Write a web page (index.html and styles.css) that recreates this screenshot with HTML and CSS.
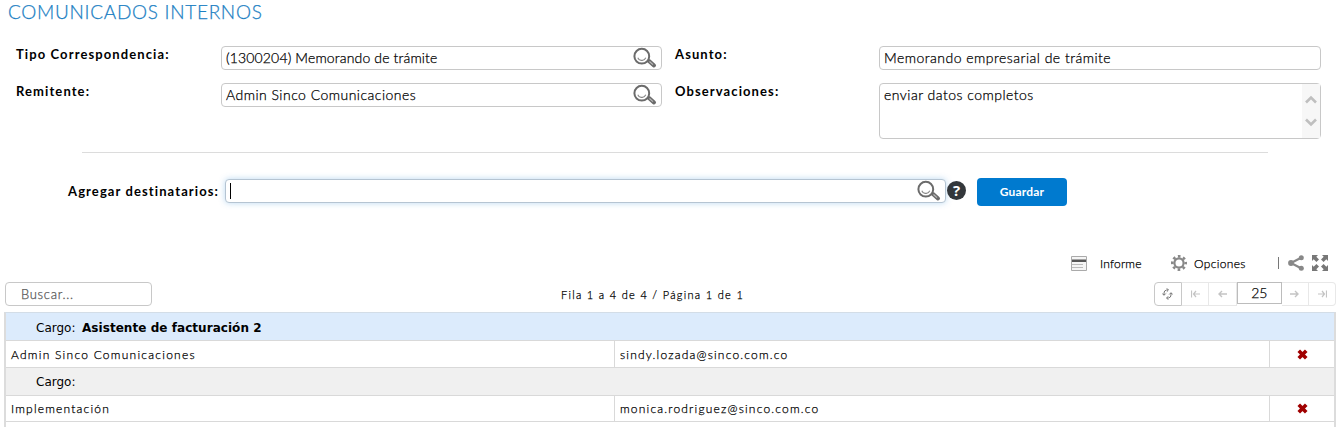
FILE: index.html
```html
<!DOCTYPE html>
<html lang="es">
<head>
<meta charset="utf-8">
<title>Comunicados internos</title>
<link rel="stylesheet" href="styles.css">
</head>
<body>
<svg class="defs" width="0" height="0" aria-hidden="true">
  <symbol id="search" viewBox="0 0 24 22">
    <path d="M16 14l5 4.500" stroke="#6b6b6b" stroke-width="4" stroke-linecap="round"/>
    <path d="M16.500 14.500l3.500 3.200" stroke="#bbb" stroke-width="1.100"/>
    <circle cx="8.800" cy="9.200" r="7.400" fill="#fff" stroke="#6b6b6b" stroke-width="2"/>
    <path d="M4.800 10.700q1.200 3 4 2.600q2.500.400 4-2.600" fill="none" stroke="#888" stroke-width="1.100"/>
  </symbol>
  <symbol id="delete" viewBox="0 0 10 10">
    <path d="M1.600 1.600l6.800 6.800M8.400 1.600l-6.800 6.800" stroke="#a00000" stroke-width="3.300"/>
  </symbol>
</svg>
<h1 class="title"><span class="t-title">COMUNICADOS INTERNOS</span></h1>
<form class="form">
  <label class="label">Tipo Correspondencia:</label>
  <div class="field"><span class="t-memo">(1300204) Memorando de trámite</span><svg class="search"><use href="#search"/></svg></div>
  <label class="label">Asunto:</label>
  <div class="field"><span class="t-value">Memorando empresarial de trámite</span></div>
  <label class="label">Remitente:</label>
  <div class="field"><span class="t-value">Admin Sinco Comunicaciones</span><svg class="search"><use href="#search"/></svg></div>
  <label class="label">Observaciones:</label>
  <div class="field area"><span class="t-value">enviar datos completos</span>
    <div class="scroll">
      <svg width="12" height="9" viewBox="0 0 12 9"><path d="M1 7.500l5-5 5 5" fill="none" stroke="#bfbfbf" stroke-width="2.600"/></svg>
      <svg width="12" height="9" viewBox="0 0 12 9"><path d="M1 1.500l5 5 5-5" fill="none" stroke="#bfbfbf" stroke-width="2.600"/></svg>
    </div>
  </div>
</form>
<hr class="rule">
<div class="add">
  <label class="addlabel">Agregar destinatarios:</label>
  <div class="field focus"><i class="caret"></i><svg class="search"><use href="#search"/></svg></div>
  <span class="help">?</span>
  <button class="save">Guardar</button>
</div>
<div class="tools">
  <svg class="report" width="16" height="15" viewBox="0 0 16 15"><path d="M.5.500h15v14H.5z" fill="#f5f5f5" stroke="#aaa"/><path d="M1 3.500h14v2.500H1z" fill="#555"/><path d="M1 8.500h11M1 11.500h11" stroke="#bbb"/></svg>
  <span class="t-inf">Informe</span>
  <svg class="gear" width="16" height="16" viewBox="0 0 16 16"><circle cx="8" cy="8" r="6.700" fill="none" stroke="#888" stroke-width="2.600" stroke-dasharray="2.600 2.662" stroke-dashoffset="1.300"/><circle cx="8" cy="8" r="4.600" fill="none" stroke="#888" stroke-width="2.200"/></svg>
  <span class="t-opc">Opciones</span>
  <i class="bar"></i>
  <svg class="share" width="16" height="16" viewBox="0 0 16 16"><path d="M13.500 2.500L3 8l10.500 5.500" fill="none" stroke="#888" stroke-width="2.200"/><circle cx="3" cy="8" r="2.900" fill="#888"/><circle cx="13.300" cy="2.800" r="2.500" fill="#888"/><circle cx="13.300" cy="13.200" r="2.500" fill="#888"/></svg>
  <svg class="expand" width="16" height="16" viewBox="0 0 16 16"><path d="M0 0h6L4.300 1.700 7 4.400 4.400 7 1.700 4.300 0 6zM16 0v6l-1.700-1.700L11.600 7 9 4.400l2.700-2.700L10 0zM0 16v-6l1.700 1.700L4.400 9 7 11.600l-2.700 2.700L6 16zM16 16h-6l1.700-1.700L9 11.600 11.600 9l2.700 2.700L16 10z" fill="#777"/></svg>
</div>
<div class="gridbar">
  <div class="find">Buscar...</div>
  <span class="count">Fila 1 a 4 de 4 / Página 1 de 1</span>
  <div class="pager">
    <span class="pg refresh"><svg width="11" height="12" viewBox="0 0 11 12"><path d="M6 2H4.500Q2 2.500 2 5v2M.300 5.500L2 7.300l1.800-1.800M5 10h1.500Q9 9.500 9 7V5M7.200 6.500L9 4.700l1.700 1.800M4.800.300L6.500 2 4.800 3.700M6.200 8.300L4.500 10l1.700 1.700" fill="none" stroke="#666" stroke-width=".9"/></svg></span>
    <span class="pg"><svg width="9" height="8" viewBox="0 0 9 8"><path d="M.5.500v7M9 4H2.500M5 1L2.500 4 5 7" fill="none" stroke="#c4c4c4" stroke-width="1.200"/></svg></span>
    <span class="pg"><svg width="9" height="8" viewBox="0 0 9 8"><path d="M9 4H1M4 1L1 4l3 3" fill="none" stroke="#c4c4c4" stroke-width="1.400"/></svg></span>
    <span class="size">25</span>
    <span class="pg"><svg width="9" height="8" viewBox="0 0 9 8"><path d="M0 4h8M5 1l3 3-3 3" fill="none" stroke="#c4c4c4" stroke-width="1.400"/></svg></span>
    <span class="pg last"><svg width="9" height="8" viewBox="0 0 9 8"><path d="M8.500.500v7M0 4h6.500M4 1l2.500 3L4 7" fill="none" stroke="#c4c4c4" stroke-width="1.200"/></svg></span>
  </div>
</div>
<div class="table">
  <div class="group blue"><span class="t-cargo">Cargo:</span><b class="t-asis">Asistente de facturación 2</b></div>
  <div class="row"><div class="wide">Admin Sinco Comunicaciones</div><div>sindy.lozada@sinco.com.co</div><div class="del"><svg width="11" height="11"><use href="#delete"/></svg></div></div>
  <div class="group"><span class="t-cargo">Cargo:</span></div>
  <div class="row second"><div>Implementación</div><div>monica.rodriguez@sinco.com.co</div><div class="del"><svg width="11" height="11"><use href="#delete"/></svg></div></div>
</div>
</body>
</html>
```
FILE: styles.css
```css
* { box-sizing: border-box; }
body { margin: 0; height: 427px; overflow: hidden; background: #fff; color: #000; font: 300 14px Lato, "Open Sans", sans-serif; -webkit-text-stroke: .25px; white-space: nowrap; display: flex; flex-direction: column; }
.defs { position: absolute; }
.title { margin: 0; padding-left: 8px; height: 46px; font-size: 19px; line-height: 23px; font-weight: 300; color: #1b80c3; }
.t-title { letter-spacing: .7px; }
.form { display: grid; grid-template-columns: 205px 441px 217px 442px; grid-template-rows: 24px 56px; row-gap: 13px; padding-left: 16px; }
.label, .addlabel { font-size: 13px; font-weight: 700; line-height: 16px; letter-spacing: 1.1px; -webkit-text-stroke: 0; }
.form > :nth-child(4n+3) { padding-left: 13px; }
.field { display: flex; align-items: center; height: 24px; padding: 0 4px; border: 1px solid #c8c8c8; border-radius: 4px; background: #fff; line-height: 22px; }
.search { width: 24px; height: 22px; margin-left: auto; flex: none; }
.area { height: 56px; align-items: flex-start; padding-right: 0; }
.scroll { margin-left: auto; width: 18px; height: 54px; background: #f7f7f7; display: flex; flex-direction: column; align-items: center; justify-content: center; gap: 14px; }
.rule { width: 1186px; height: 1px; margin: 13px 0 0 82px; border: 0; background: #dcdcdc; flex: none; }
.add { display: flex; align-items: flex-start; height: 53px; margin-top: 25px; padding-left: 68px; flex: none; }
.addlabel { width: 157px; line-height: 26px; }
.focus { width: 721px; margin-top: 1px; border-color: #b5c4d2; box-shadow: 0 0 6px rgba(60, 145, 215, .35); }
.caret { width: 1px; height: 16px; background: #000; }
.help { width: 19px; height: 19px; margin: 3px 11px 0 1px; border-radius: 50%; background: #33373b; color: #fff; font: 700 15px/19px "Open Sans", sans-serif; text-align: center; -webkit-text-stroke: 0; }
.save { width: 90px; height: 28px; padding: 0; border: 0; border-radius: 4px; background: #007acf; color: #fff; font: 700 12px/28px Lato, sans-serif; letter-spacing: .2px; -webkit-text-stroke: 0; }
.tools { display: flex; align-items: center; height: 16px; margin-top: 24px; padding-left: 1071px; font-size: 12px; letter-spacing: .2px; flex: none; }
.report { margin-right: 13px; }
.t-inf { width: 71px; }
.gear { margin-right: 7px; }
.t-opc { width: 84px; letter-spacing: .35px; }
.bar { width: 1px; height: 12px; background: #777; margin-right: 9px; }
.expand { margin-left: 8px; }
.gridbar { display: grid; grid-template-columns: 556px 593px 182px; align-items: start; height: 31px; margin-top: 10px; padding-left: 5px; flex: none; }
.find { width: 147px; height: 24px; margin-top: 1px; border: 1px solid #c8c8c8; border-radius: 4px; padding-left: 15px; font-size: 13px; line-height: 23px; letter-spacing: .7px; color: #555; }
.count { font-size: 11px; line-height: 27px; letter-spacing: 1.3px; }
.pager { display: flex; height: 24px; margin-top: 1px; }
.pg { display: flex; align-items: center; justify-content: center; width: 28px; height: 24px; border: 1px solid #e8e8e8; border-left: 0; }
.refresh { border: 1px solid #c8c8c8; border-radius: 4px 0 0 4px; }
.last { width: 27px; border-radius: 0 4px 4px 0; }
.size { width: 45px; height: 22px; border: 1px solid #bcbcbc; text-align: center; line-height: 20px; }
.table { width: 1332px; height: 115px; margin-left: 4px; border-left: 2px solid #dcdcdc; border-right: 2px solid #dcdcdc; border-top: 1px solid #d3dde7; flex: none; }
.group { display: flex; align-items: center; height: 28px; padding: 0 0 0 30px; border-bottom: 1px solid #d9d9d9; background: #f0f0f0; font: 12px "DejaVu Sans", sans-serif; -webkit-text-stroke: 0; }
.group.blue { padding-top: 2px; background: #dcebfc; }
.t-cargo { width: 46px; }
.t-asis { letter-spacing: .05px; }
.row { display: grid; grid-template-columns: 609px 655px 1fr; height: 27px; border-bottom: 1px solid #d9d9d9; font-size: 12px; line-height: 27px; letter-spacing: 1.2px; }
.row > div { padding-left: 5px; border-right: 1px solid #d9d9d9; }
.row > .wide { letter-spacing: 1.25px; }
.row > .del { display: flex; align-items: center; justify-content: center; padding: 0 0 1px 1px; border: 0; }
.row.second { height: 26px; line-height: 25px; }
.t-value { letter-spacing: .48px; }
.t-memo { letter-spacing: .15px; }
```
